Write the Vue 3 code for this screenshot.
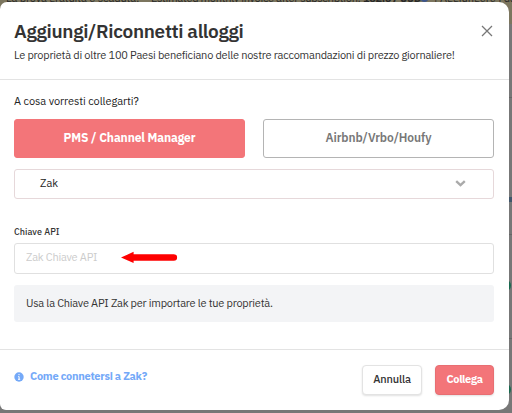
<script setup>
import { ref } from 'vue'

const tabs = ['PMS / Channel Manager', 'Airbnb/Vrbo/Houfy']
const activeTab = ref(0)
const apiKey = ref('')
</script>

<template>
  <div class="page">
    <div class="trial-bar">
      <span class="trial-start">La prova gratuita è scaduta.</span>
      <span class="trial-mid">* Estimated monthly invoice after subscription: <b>182.67 USD</b></span>
      <i class="trial-dot"></i>
      <span>| Aggiungere i dati</span>
    </div>
    <div class="page-row first"></div>
    <div class="page-row second"></div>
    <div class="page-row third"></div>
    <i class="status blue"></i>
    <i class="status green-one"></i>
    <i class="status green-two"></i>

    <div class="modal">
      <header class="modal-header">
        <div class="heading">
          <h1>Aggiungi/Riconnetti alloggi</h1>
          <p>Le proprietà di oltre 100 Paesi beneficiano delle nostre raccomandazioni di prezzo giornaliere!</p>
        </div>
        <button class="close" aria-label="Chiudi">
          <svg width="12" height="12" viewBox="0 0 12 12">
            <path d="M1 1L11 11M11 1L1 11" stroke="#777" stroke-width="1.25" fill="none" />
          </svg>
        </button>
      </header>

      <main class="modal-body">
        <div class="question"><span>A cosa vorresti collegarti?</span></div>
        <div class="tabs">
          <button
            v-for="(tab, i) in tabs"
            :key="tab"
            :class="['tab', { active: activeTab === i }]"
            @click="activeTab = i"
          ><span>{{ tab }}</span></button>
        </div>
        <div class="select">
          <span>Zak</span>
          <svg width="11" height="7" viewBox="0 0 11 7">
            <path d="M1.2 1.2L5.5 5.1L9.8 1.2" stroke="#aaa" stroke-width="2.4" fill="none" />
          </svg>
        </div>
        <label class="field-label" for="key">Chiave API</label>
        <div class="field">
          <input id="key" v-model="apiKey" placeholder="Zak Chiave API">
          <svg class="arrow" width="58" height="14" viewBox="0 0 58 14">
            <path d="M0 6.6L12.6 0.8V3.2H52.8A3.3 3.3 0 0 1 52.8 9.8H12.6V12Z" fill="#fe0000" />
          </svg>
        </div>
        <div class="info"><span>Usa la Chiave API Zak per importare le tue proprietà.</span></div>
      </main>

      <footer class="modal-footer">
        <a class="help">
          <svg width="10" height="10" viewBox="0 0 10 10">
            <circle cx="5" cy="5" r="4.7" fill="#74a9f8" />
            <path d="M5 2V3.2M4.2 4.6H5.1V7.3M4 7.3H6.2" stroke="#fff" stroke-width="1" fill="none" />
          </svg>
          <span>Come connetersi a Zak?</span>
        </a>
        <button class="btn cancel"><span>Annulla</span></button>
        <button class="btn submit"><span>Collega</span></button>
      </footer>
    </div>
  </div>
</template>

<style>
body { margin: 0; overflow: hidden; }
</style>

<style scoped>
* { box-sizing: border-box; }
.page { position: relative; width: 512px; height: 413px; padding-top: 2px; background: #777; overflow: hidden; font-family: "IBM Plex Sans", Roboto, "Liberation Sans", sans-serif; font-size: 11px; color: #333; }
button { font-family: inherit; padding: 0; cursor: pointer; }

.trial-bar { position: absolute; top: 0; left: 0; width: 512px; height: 24px; background: #7c765f; color: #292929; display: flex; line-height: 14px; white-space: nowrap; padding-left: 6px; }
.trial-bar > * { margin-top: -9px; }
.trial-start { flex: none; width: 138px; letter-spacing: -0.1px; }
.trial-mid { flex: none; width: 276px; letter-spacing: -0.3px; }
.trial-dot { width: 9px; height: 11px; border-radius: 50%; background: #3e568a; margin-right: 5px; flex: none; }
.page-row { position: absolute; left: 0; width: 512px; height: 1px; background: #666; }
.first { top: 97px; }
.second { top: 234px; }
.third { top: 338px; }
.status { position: absolute; right: 1px; width: 11px; height: 11px; border-radius: 50%; background: #18694e; }
.blue { top: 197px; right: 0; height: 5px; border-radius: 0; background: #40566b; }
.green-one { top: 280px; }
.green-two { top: 384px; }

.modal { position: relative; width: 509px; height: 408px; background: #fff; border-radius: 7px 10px 10px 6px; display: flex; flex-direction: column; }
.modal-header { height: 78px; flex: none; border-bottom: 1px solid #e3e3e3; padding: 16px 16px 0 14px; display: flex; justify-content: space-between; }
h1 { margin: 0; font-size: 19px; line-height: 26px; font-weight: 600; white-space: nowrap; letter-spacing: -0.33px; }
.heading p { margin: 4px 0 0; line-height: 15px; white-space: nowrap; letter-spacing: -0.22px; }
.close { width: 12px; height: 12px; margin-top: 7px; border: 0; background: none; display: flex; }

.modal-body { flex: 1; padding: 13px 15px 0 14px; display: flex; flex-direction: column; }
.question { height: 26px; line-height: 17px; color: #222; letter-spacing: -0.06px; }
.tabs { display: flex; gap: 18px; }
.tab { flex: 1; height: 39px; border: 1px solid #b4b4b4; border-radius: 3px; background: #fff; color: #777; font-size: 12px; font-weight: 600; padding-bottom: 2px; letter-spacing: -0.08px; }
.tab.active { background: #f37579; border-color: #f37579; color: #fff; font-weight: 700; letter-spacing: -0.12px; }
.select { margin-top: 11px; height: 30px; border: 1px solid #e6d8da; border-radius: 3px; padding: 0 27px 2px 25px; display: flex; align-items: center; justify-content: space-between; color: #222; }
.field-label { margin-top: 26px; height: 18px; line-height: 13px; font-size: 9px; font-weight: 500; letter-spacing: 0.05px; }
.field { height: 31px; border: 1px solid #e0e0e0; border-radius: 3px; padding: 0 11px 2px; display: flex; align-items: center; }
.field input { width: 95px; padding: 0 0 2px; border: 0; outline: 0; background: none; font: inherit; letter-spacing: -0.22px; }
.field input::placeholder { color: #ccc; opacity: 1; }
.arrow { flex: none; }
.info { margin-top: 11px; height: 37px; line-height: 36px; border-radius: 3px; background: #f3f4f6; padding-left: 12px; letter-spacing: -0.23px; }

.modal-footer { height: 61px; flex: none; border-top: 1px solid #e3e3e3; padding: 15px 15px 0 14px; display: flex; }
.help { margin-right: auto; height: 23px; display: flex; align-items: center; gap: 6px; color: #74a9f8; font-weight: 700; letter-spacing: -0.27px; }
.help span { padding-bottom: 2px; }
.btn { height: 30px; width: 60px; border: 1px solid #e3e3e3; border-radius: 4px; background: #fff; font-size: 11px; font-weight: 500; color: #333; box-shadow: 0 1px 2px rgba(0, 0, 0, 0.12); padding-bottom: 2px; letter-spacing: -0.15px; }
.submit { width: 59px; margin-left: 13px; background: #f37579; border-color: #e86e72; color: #fff; font-weight: 700; letter-spacing: -0.33px; }
</style>
